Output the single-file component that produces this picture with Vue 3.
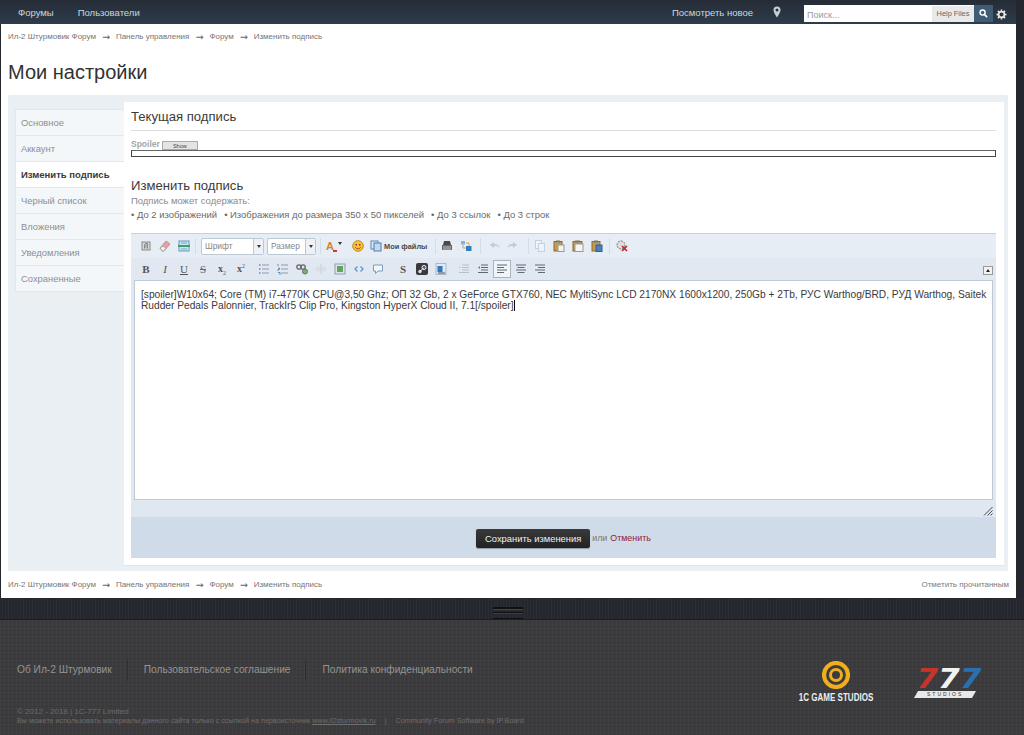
<script setup>
const crumbs = ['Ил-2 Штурмовик Форум', 'Панель управления', 'Форум', 'Изменить подпись']
const tabs = ['Основное', 'Аккаунт', 'Изменить подпись', 'Черный список', 'Вложения', 'Уведомления', 'Сохраненные']
</script>

<template>
  <div class="page">
    <div class="sheet">
      <nav class="topnav">
        <a class="nav-a first">Форумы</a>
        <a class="nav-a">Пользователи</a>
        <span class="grow"></span>
        <a class="nav-a new">Посмотреть новое</a>
        <svg class="pin" width="8" height="12" viewBox="0 0 8 12"><path d="M4 0.5a3.5 3.5 0 0 0-3.5 3.5c0 2.6 3.5 7.500 3.500 7.500s3.500-4.900 3.500-7.500A3.500 3.500 0 0 0 4 .5zm0 5a1.500 1.500 0 1 1 0-3 1.500 1.500 0 0 1 0 3z" fill="#c6d0d8"/></svg>
        <div class="search">
          <span class="ph">Поиск...</span>
          <span class="scope">Help Files</span>
        </div>
        <button class="sbtn"><svg width="9" height="9" viewBox="0 0 10 10"><circle cx="4" cy="4" r="2.800" fill="none" stroke="#fff" stroke-width="1.600"/><path d="M6.200 6.200L9 9" stroke="#fff" stroke-width="1.800"/></svg></button>
        <svg class="gear" width="11" height="11" viewBox="0 0 12 12"><circle cx="6" cy="6" r="3.200" fill="none" stroke="#e6e6e6" stroke-width="2"/><path d="M6 .5v2.200M6 9.300v2.200M.5 6h2.200M9.300 6h2.200M2.100 2.100l1.500 1.500M8.400 8.400l1.500 1.500M2.100 9.900l1.500-1.500M8.400 3.600l1.500-1.500" stroke="#e6e6e6" stroke-width="1.700"/></svg>
      </nav>

      <div class="crumbs top">
        <template v-for="(c, i) in crumbs" :key="c">
          <span>{{ c }}</span><span v-if="i < 3" class="arr">→</span>
        </template>
      </div>

      <h1 class="title">Мои настройки</h1>

      <div class="panel">
        <ul class="tabs">
          <li v-for="t in tabs" :key="t" :class="{ on: t === 'Изменить подпись' }">{{ t }}</li>
        </ul>
        <main class="content">
          <h2 class="h-cur">Текущая подпись</h2>
          <div class="spoiler-row"><b>Spoiler</b><span class="show">Show</span></div>
          <div class="spoiler-box"></div>

          <h2 class="h-edit">Изменить подпись</h2>
          <p class="may">Подпись может содержать:</p>
          <p class="rules">
            <span>• До 2 изображений</span><span>• Изображения до размера 350 x 50 пикселей</span><span>• До 3 ссылок</span><span>• До 3 строк</span>
          </p>

          <div class="editor">
            <div class="bar b1">
              <svg class="ic" viewBox="0 0 12 12"><rect x="2" y="2" width="8" height="8" fill="#d8d8d8" stroke="#8a8a8a"/><path d="M4.800 8.500V4.500l1-1h1.400v5" fill="none" stroke="#666"/></svg>
              <svg class="ic" viewBox="0 0 12 12"><path d="M1 8l6-7 4 3-6 7H3z" fill="#ef9aa0" stroke="#b99"/><path d="M1 8l2 3h2l2-3-3-2z" fill="#eee" stroke="#aaa"/></svg>
              <svg class="ic third" viewBox="0 0 12 12"><rect x="1" y="1" width="10" height="10" fill="#d3e4ee" stroke="#5a9cc0"/><rect x="0" y="5" width="12" height="2" fill="#3aa070"/><path d="M3 3h6M3 9h6" stroke="#6aa8c8"/></svg>
              <i class="sep s1"></i>
              <span class="combo font"><span>Шрифт</span><em><u></u></em></span>
              <span class="combo size"><span>Размер</span><em><u></u></em></span>
              <i class="sep s2"></i>
              <span class="acolor"><b>A</b><span class="ar"></span><u></u></span>
              <svg class="ic smile" viewBox="0 0 12 12"><circle cx="6" cy="6" r="5.300" fill="#f7c533" stroke="#c18a10"/><circle cx="4.200" cy="4.700" r=".8" fill="#704"/><circle cx="7.800" cy="4.700" r=".8" fill="#704"/><path d="M3.300 7.300c1.500 2 3.900 2 5.400 0" fill="none" stroke="#a33"/></svg>
              <svg class="ic files" viewBox="0 0 12 12"><rect x="1" y="1" width="7" height="8" fill="#dce9f7" stroke="#5a86b8"/><rect x="4" y="3" width="7" height="8" fill="#c3d8ef" stroke="#4f7cae"/></svg>
              <b class="myfiles">Мои файлы</b>
              <i class="sep s3"></i>
              <svg class="ic" viewBox="0 0 12 12"><path d="M3 1h6l1 4H2z" fill="#4a4a4a"/><rect x="1" y="5" width="10" height="5" fill="#666"/><path d="M2 7h8M2 9h8" stroke="#ddd" stroke-width=".8"/></svg>
              <svg class="ic net" viewBox="0 0 12 12"><rect x="1" y="1" width="4" height="3.500" fill="#79b4e6"/><rect x="6" y="6" width="5.500" height="5" fill="#2f7fc4"/><path d="M3 5v3h3M6 3h3v3" stroke="#e8a22e" fill="none"/></svg>
              <i class="sep s4"></i>
              <svg class="ic undo" viewBox="0 0 12 12"><path d="M1 5l4-3v2c3 0 5 1 6 4-2-2-3-2-6-2v2z" fill="#b9cde2"/></svg>
              <svg class="ic undo" viewBox="0 0 12 12"><path d="M11 5L7 2v2C4 4 2 5 1 8c2-2 3-2 6-2v2z" fill="#b9cde2"/></svg>
              <i class="sep s5"></i>
              <svg class="ic" viewBox="0 0 12 12"><rect x="1.500" y=".5" width="6" height="8" fill="#eef3f8" stroke="#c3d2e2"/><rect x="4.500" y="3.500" width="6" height="8" fill="#eef3f8" stroke="#c3d2e2"/></svg>
              <svg class="ic" viewBox="0 0 12 12"><rect x="1" y="1.500" width="8" height="9.500" fill="#c99a4e" stroke="#8a6a33"/><rect x="3" y=".5" width="4" height="2" fill="#777"/><rect x="5" y="5" width="6" height="6.500" fill="#f3f3ee" stroke="#999"/></svg>
              <svg class="ic" viewBox="0 0 12 12"><rect x="1" y="1.500" width="9" height="9.500" fill="#c99a4e" stroke="#8a6a33"/><rect x="3" y=".5" width="5" height="2" fill="#777"/><rect x="3" y="4" width="8" height="7.500" fill="#f6f6f0" stroke="#999"/></svg>
              <svg class="ic" viewBox="0 0 12 12"><rect x="1" y="1.500" width="8" height="9.500" fill="#c99a4e" stroke="#8a6a33"/><rect x="3" y=".5" width="4" height="2" fill="#777"/><rect x="5" y="5" width="6" height="6.500" fill="#4a80bf" stroke="#2e5f96"/></svg>
              <i class="sep s6"></i>
              <svg class="ic" viewBox="0 0 12 12"><circle cx="5" cy="5" r="4" fill="#ddd" stroke="#777" stroke-dasharray="2 1"/><path d="M6 6l5 5M11 6l-5 5" stroke="#c4202c" stroke-width="1.600"/></svg>
            </div>
            <div class="bar b2">
              <b class="gl b">B</b>
              <i class="gl i">I</i>
              <u class="gl u">U</u>
              <s class="gl st">S</s>
              <span class="gl x">x<sub>2</sub></span>
              <span class="gl x">x<sup>2</sup></span>
              <svg class="ic li first-li" viewBox="0 0 12 12"><path d="M4 2h7M4 6h7M4 10h7" stroke="#8a9cb0"/><path d="M1 2h1.500M1 6h1.500M1 10h1.500" stroke="#5a8fc4" stroke-width="1.500"/></svg>
              <svg class="ic li" viewBox="0 0 12 12"><path d="M4 2h7M4 6h7M4 10h7" stroke="#8a9cb0"/><path d="M1 1v2M1 5h1.500v1.500H1V8M1 9.500h2V12" fill="none" stroke="#5a8fc4"/></svg>
              <svg class="ic li" viewBox="0 0 12 12"><circle cx="3" cy="4" r="2.200" fill="none" stroke="#666" stroke-width="1.300"/><circle cx="7" cy="4" r="2.200" fill="none" stroke="#666" stroke-width="1.300"/><circle cx="9" cy="8.500" r="2.500" fill="#7fb069" stroke="#577"/></svg>
              <svg class="ic li" viewBox="0 0 12 12"><circle cx="3" cy="6" r="2.500" fill="#d8dfe6"/><circle cx="9" cy="6" r="2.500" fill="#d8dfe6"/><path d="M6 1v10" stroke="#c5ced7"/></svg>
              <svg class="ic li" viewBox="0 0 12 12"><rect x="1" y="1" width="10" height="10" fill="#dce6ef" stroke="#8da0b2"/><rect x="3" y="3" width="6" height="6" fill="#63a35a"/></svg>
              <svg class="ic li" viewBox="0 0 12 12"><path d="M4.500 3.500L2 6l2.500 2.500M7.500 3.500L10 6 7.500 8.500" fill="none" stroke="#5d9bd0" stroke-width="1.400"/></svg>
              <svg class="ic li" viewBox="0 0 12 12"><path d="M1.500 2h9v6H6L3.500 10.500V8h-2z" fill="#f2f6fa" stroke="#7c9cb8"/></svg>
              <b class="gl b s-bold">S</b>
              <svg class="ic steam" viewBox="0 0 12 12"><rect width="12" height="12" rx="2" fill="#3a3a3e"/><circle cx="8" cy="4.500" r="2" fill="none" stroke="#fff"/><circle cx="4" cy="8.500" r="1.700" fill="#ddd"/><path d="M4 8.500L8 4.500" stroke="#fff"/></svg>
              <svg class="ic li" viewBox="0 0 12 12"><rect x="1" y=".5" width="10" height="11" fill="#dfe8f3" stroke="#a8b9cc"/><rect x="2.500" y="3" width="5" height="6" fill="#3079bf"/><path d="M3 10h7" stroke="#3c4f66"/></svg>
              <svg class="ic al dim" viewBox="0 0 12 12"><path d="M4 2h7M4 4.500h7M4 7h7M1 9.500h10" stroke="#b4c0cc"/><path d="M1 3l2 1.500L1 6" fill="#c7d0da"/></svg>
              <svg class="ic al" viewBox="0 0 12 12"><path d="M4 2h7M4 4.500h7M4 7h7M1 9.500h10" stroke="#5a6a79"/><path d="M3 3L1 4.500 3 6" fill="#3e86c6"/></svg>
              <span class="al-on"><svg class="ic" viewBox="0 0 12 12"><path d="M1 2h10M1 4.500h7M1 7h10M1 9.500h7" stroke="#5a6a79"/></svg></span>
              <svg class="ic al" viewBox="0 0 12 12"><path d="M1 2h10M2.500 4.500h7M1 7h10M2.500 9.500h7" stroke="#5a6a79"/></svg>
              <svg class="ic al" viewBox="0 0 12 12"><path d="M1 2h10M4 4.500h7M1 7h10M4 9.500h7" stroke="#5a6a79"/></svg>
              <span class="grow"></span>
              <span class="collapse"><u></u></span>
            </div>
            <div class="area">[spoiler]W10x64; Core (TM) i7-4770K CPU@3,50 Ghz; ОП 32 Gb, 2 x GeForce GTX760, NEC MyltiSync LCD 2170NX 1600x1200, 250Gb + 2Tb, РУС Warthog/BRD, РУД Warthog, Saitek Rudder Pedals Palonnier, TrackIr5 Clip Pro, Kingston HyperX Cloud II, 7.1[/spoiler]<span class="caret"></span></div>
            <div class="resize">
              <svg width="10" height="10" viewBox="0 0 10 10"><path d="M1 9.500L9.500 1M4.500 9.500L9.500 4.500M7.500 9.500l2-2" stroke="#4a4a4a" stroke-width="1"/></svg>
            </div>
          </div>
          <div class="submit">
            <button class="save">Сохранить изменения</button>
            <span class="or">или</span>
            <a class="cancel">Отменить</a>
          </div>
        </main>
      </div>

      <div class="crumbs bottom">
        <template v-for="(c, i) in crumbs" :key="c">
          <span>{{ c }}</span><span v-if="i < 3" class="arr">→</span>
        </template>
        <span class="grow"></span>
        <span class="mark">Отметить прочитанным</span>
      </div>
    </div>

    <div class="strip"><span class="handle"></span></div>

    <footer class="foot">
      <div class="foot-left">
        <div class="foot-links">
          <a>Об Ил-2 Штурмовик</a><a>Пользовательское соглашение</a><a>Политика конфиденциальности</a>
        </div>
        <div class="copy">© 2012 - 2018 | 1C-777 Limited</div>
        <div class="legal">Вы можете использовать материалы данного сайта только с ссылкой на первоисточник <u>www.il2sturmovik.ru</u><span class="pipe">|</span>Community Forum Software by IP.Board</div>
      </div>
      <div class="logos">
        <div class="logo-1c">
          <svg width="28" height="28" viewBox="0 0 28 28"><circle cx="14" cy="14" r="12" fill="none" stroke="#f0ad1c" stroke-width="4.200"/><circle cx="14" cy="14" r="5.500" fill="none" stroke="#f0ad1c" stroke-width="3"/></svg>
          <span>1C GAME STUDIOS</span>
        </div>
        <div class="logo-777">
          <div class="sevens"><span class="r">7</span><span class="w">7</span><span class="bl">7</span></div>
          <div class="studios"><span>STUDIOS</span></div>
        </div>
      </div>
    </footer>
  </div>
</template>

<style>
html, body { margin: 0; background: #24272d; }
</style>

<style scoped>
* { box-sizing: border-box; }
.page {
  width: 1024px;
  height: 735px;
  overflow: hidden;
  font-family: "Liberation Sans", Arial, sans-serif;
  background: #24272d;
}
.grow { flex: 1; }

.sheet {
  width: 1015px;
  height: 598px;
  margin-left: 1px;
  background: #fff;
  display: flex;
  flex-direction: column;
}
.topnav {
  height: 24px;
  flex: none;
  margin-left: -1px;
  width: 1016px;
  padding-right: 9px;
  background: linear-gradient(#262c36, #2d3c4b);
  display: flex;
  align-items: center;
  color: #cfd7de;
  font-size: 9.500px;
}
.nav-a { white-space: nowrap; margin-top: 1px; }
.nav-a.first { margin-left: 18px; margin-right: 24px; }
.pin { margin-left: 20px; margin-right: 23px; margin-top: -1px; flex: none; }
.search {
  width: 170px;
  height: 17px;
  margin-top: 5px;
  align-self: flex-start;
  background: #fff;
  display: flex;
  align-items: center;
  justify-content: space-between;
  color: #999;
  font-size: 9px;
}
.ph { margin-left: 3px; margin-top: 2px; }
.scope {
  width: 42px;
  height: 16px;
  background: #e9e9e9;
  color: #666;
  font-size: 7.400px;
  line-height: 15px;
  text-align: center;
}
.sbtn {
  width: 19px;
  height: 17px;
  margin: 5px 0 0 0;
  align-self: flex-start;
  padding: 0;
  border: 0;
  background: #3f5c75;
  display: flex;
  align-items: center;
  justify-content: center;
}
.gear { margin-left: 3px; margin-top: 5px; flex: none; }

.crumbs {
  display: flex;
  align-items: center;
  font-size: 8px;
  color: #757575;
  white-space: nowrap;
}
.crumbs.top { margin: 7px 0 0 7px; height: 11px; }
.arr { margin: 0 6px; color: #666; font-family: "DejaVu Sans", sans-serif; font-size: 9.500px; width: 8px; }

.title {
  margin: 17px 0 0 7px;
  font-size: 20px;
  line-height: 26px;
  font-weight: 400;
  color: #323232;
  height: 26px;
}
.panel {
  margin: 10px 0 0 7px;
  width: 1000px;
  height: 476px;
  background: #e9eff3;
  padding: 7px 4px 5px 7px;
  display: flex;
  align-items: flex-start;
  border-radius: 2px;
}
.tabs {
  list-style: none;
  width: 109px;
  margin: 7px 0 0;
  padding: 0;
  flex: none;
  background: #f4f7f9;
  border: 1px solid #e1e7eb;
  border-right: 0;
}
.tabs li {
  height: 26px;
  padding-left: 5px;
  line-height: 25px;
  font-size: 9.400px;
  color: #8d8f91;
  border-bottom: 1px solid #e3e8ec;
}
.tabs li:last-child { border-bottom: 0; height: 25px; }
.tabs li.on {
  background: #fff;
  color: #3a3a3a;
  font-weight: 700;
  font-size: 9.500px;
  margin-right: -1px;
}
.content {
  flex: 1;
  height: 464px;
  background: #fff;
  border-bottom: 1px solid #dfe5ea;
  padding: 0 8px 0 7px;
  min-width: 0;
}
.h-cur {
  margin: 0;
  height: 29px;
  padding-top: 6px;
  font-size: 13.100px;
  line-height: 18px;
  font-weight: 400;
  color: #3b3b3b;
  border-bottom: 1px solid #dedede;
}
.spoiler-row {
  margin-top: 7px;
  height: 12px;
  display: flex;
  align-items: center;
  gap: 2px;
  font-size: 8.500px;
}
.spoiler-row b { color: #a6a6a6; font-weight: 700; }
.show {
  width: 36px;
  height: 9px;
  margin-top: 2px;
  background: #e4e4e4;
  border: 1px solid #aaa;
  font-size: 5.500px;
  line-height: 8px;
  text-align: center;
  color: #444;
}
.spoiler-box {
  height: 7px;
  border: 1px solid #444;
  background: #fff;
  border-top-color: #666;
}
.h-edit {
  margin: 21px 0 0;
  font-size: 13.100px;
  line-height: 16px;
  font-weight: 400;
  color: #3b3b3b;
}
.may {
  margin: 1px 0 0;
  font-size: 9.450px;
  line-height: 12px;
  color: #8a8a8a;
}
.rules {
  margin: 2px 0 0;
  display: flex;
  gap: 7px;
  font-size: 9.450px;
  line-height: 12px;
  color: #6a6a6a;
}

.editor {
  margin-top: 12px;
  height: 284px;
  background: #dfe7f0;
  border-top: 1px solid #c4d0dc;
  display: flex;
  flex-direction: column;
}
.bar { display: flex; align-items: center; flex: none; }
.b1 { height: 24px; padding: 0 0 0 9px; background: #e6edf4; }
.b2 { height: 22px; padding: 0 0 0 9px; background: #e1e8f1; }
.ic { width: 12px; height: 12px; flex: none; margin-right: 7px; }
.third { margin-right: 5px; }
.sep { width: 1px; height: 16px; background: #d4dde7; flex: none; }
.s1 { margin: 0 5px 0 0; }
.s2 { margin: 0 5px 0 1px; }
.s3 { margin: 0 5px 0 8px; }
.s4 { margin: 0 8px 0 1px; }
.s5 { margin: 0 5px 0 5px; }
.s6 { margin: 0 6px 0 -1px; }
.combo {
  height: 17px;
  display: flex;
  align-items: center;
  background: #fff;
  border: 1px solid #bcc8d4;
  border-radius: 2px;
  font-size: 8.400px;
  color: #888;
  padding-left: 3px;
  margin-right: 3px;
  position: relative;
}
.combo.font { width: 63px; }
.combo.size { width: 49px; }
.combo em {
  position: absolute;
  right: 0;
  top: 0;
  bottom: 0;
  width: 10px;
  border-left: 1px solid #bcc8d4;
  background: #eef2f6;
  display: flex;
  align-items: center;
  justify-content: center;
}
.combo u {
  width: 0;
  height: 0;
  border: 2px solid transparent;
  border-top: 3px solid #333;
  border-bottom: 0;
}
.acolor {
  position: relative;
  width: 17px;
  height: 13px;
  margin-right: 9px;
  flex: none;
  font-size: 11px;
  line-height: 12px;
  color: #d5842b;
}
.acolor .ar {
  position: absolute;
  right: 1px;
  top: 2px;
  border: 2px solid transparent;
  border-top: 3px solid #333;
  border-bottom: 0;
}
.acolor u {
  position: absolute;
  left: 7px;
  bottom: 1px;
  width: 4px;
  height: 2px;
  background: #d03a2a;
}
.smile { margin-right: 6px; }
.files { margin-right: 2px; }
.myfiles { font-size: 7.400px; color: #4a4a4a; white-space: nowrap; }
.net { margin-right: 7px; }
.undo { margin-right: 5px; }
.gl {
  width: 12px;
  margin-right: 7px;
  text-align: center;
  font-family: "Liberation Serif", serif;
  font-size: 11px;
  line-height: 12px;
  color: #555;
  flex: none;
}
.gl.st { color: #666; }
.gl.x { font-weight: 700; font-size: 10px; white-space: nowrap; }
.gl sub, .gl sup { font-size: 6px; font-weight: 400; line-height: 0; color: #557; }
.li { margin-right: 7px; }
.first-li { margin-left: 4px; }
.s-bold { margin-left: 6px; margin-right: 7px; }
.steam { margin-right: 7px; }
.al { margin-right: 7px; }
.dim { margin-left: 4px; }
.al-on {
  width: 18px;
  height: 18px;
  background: #f2f5f8;
  border: 1px solid #a8b4c0;
  display: flex;
  align-items: center;
  justify-content: center;
  margin: 0 4px 0 -3px;
  flex: none;
}
.al-on .ic { margin: 0; }
.collapse {
  width: 10px;
  height: 9px;
  margin: 2px 3px 0 0;
  background: #f2f2f2;
  border: 1px solid #999;
  display: flex;
  align-items: center;
  justify-content: center;
}
.collapse u {
  border: 2px solid transparent;
  border-bottom: 3px solid #222;
  border-top: 0;
}
.area {
  margin: 0 3px;
  flex: none;
  height: 220px;
  background: #fff;
  border: 1px solid #bfc9d3;
  padding: 8px 5px 0 6px;
  font-size: 10.200px;
  line-height: 11px;
  color: #3a3a3a;
}
.caret {
  display: inline-block;
  width: 1px;
  height: 11px;
  background: #111;
  vertical-align: -2px;
}
.resize {
  flex: 1;
  display: flex;
  justify-content: flex-end;
  align-items: flex-end;
  padding: 0 3px 1px 0;
}
.submit {
  height: 41px;
  background: #cfdbe8;
  display: flex;
  align-items: center;
  justify-content: center;
  font-size: 8.900px;
  padding-top: 1px;
}
.save {
  width: 114px;
  height: 19px;
  padding: 0;
  border: 0;
  border-radius: 2px;
  background: linear-gradient(#3a3a3a, #222);
  box-shadow: 0 1px 1px rgba(0,0,0,.3);
  color: #f0f0f0;
  font: 9.400px "Liberation Sans", Arial, sans-serif;
}
.or { margin: 0 3px 0 2px; color: #777; }
.cancel { color: #8f2232; }

.crumbs.bottom {
  margin: 6px 7px 0 7px;
  height: 14px;
}
.mark { color: #7b7b7b; font-size: 8px; }

.strip {
  height: 22px;
  display: flex;
  justify-content: flex-start;
  background: repeating-linear-gradient(90deg, #24272d 0 2px, #2a2d33 2px 3px);
  border-bottom: 1px solid #1d1e22;
}
.handle {
  width: 30px;
  height: 12px;
  margin: 9px 0 0 493px;
  border-top: 1px solid #111;
  border-bottom: 1px solid #111;
  background: linear-gradient(#111 0 1px, #454545 1px 2px, transparent 2px 4px, #111 4px 5px, #3c3c3c 5px 6px, transparent 6px);
}
.foot {
  height: 115px;
  background-color: #3c3c3e;
  background-image:
    repeating-linear-gradient(90deg, rgba(255,255,255,.025) 0 1px, transparent 1px 4px),
    repeating-linear-gradient(0deg, rgba(0,0,0,.06) 0 1px, transparent 1px 4px);
  display: flex;
  position: relative;
}
.foot-left { width: 780px; padding: 39px 0 0 17px; }
.foot-links {
  display: flex;
  align-items: center;
  font-size: 10.200px;
  line-height: 22px;
  color: #949494;
}
.foot-links a { padding-right: 15px; margin-right: 16px; border-right: 1px solid #2e2e30; white-space: nowrap; }
.foot-links a:last-child { border: 0; }
.copy { margin-top: 26px; font-size: 8px; line-height: 10px; color: #6b6b6b; }
.legal { margin-top: -1px; font-size: 7.200px; line-height: 10px; color: #6d6d6d; white-space: nowrap; }
.pipe { margin: 0 9px; }
.logos { flex: 1; position: relative; }
.logo-1c {
  position: absolute;
  left: 19px;
  top: 41px;
  width: 74px;
  display: flex;
  flex-direction: column;
  align-items: center;
}
.logo-1c span {
  margin-top: 2px;
  font-weight: 700;
  font-size: 11px;
  line-height: 12px;
  color: #eee;
  white-space: nowrap;
  transform: scaleX(.73);
}
.logo-777 {
  position: absolute;
  left: 134px;
  top: 48px;
  width: 70px;
}
.sevens {
  display: flex;
  gap: 0;
  padding-left: 2px;
  font: italic 700 26px/22px "DejaVu Sans", sans-serif;
  height: 22px;
  transform: scaleX(1.200);
  transform-origin: left;
}
.sevens .r { color: #c6342b; }
.sevens .w { color: #f2f2f2; }
.sevens .bl { color: #2a6fb0; }
.studios {
  width: 58px;
  height: 7px;
  margin-top: 1px;
  background: #e8e8e8;
  transform: skewX(-30deg);
  transform-origin: left bottom;
  text-align: center;
  font-size: 5px;
  line-height: 7px;
  letter-spacing: 2px;
  color: #333;
}
.studios span { display: inline-block; transform: skewX(30deg); }
</style>
